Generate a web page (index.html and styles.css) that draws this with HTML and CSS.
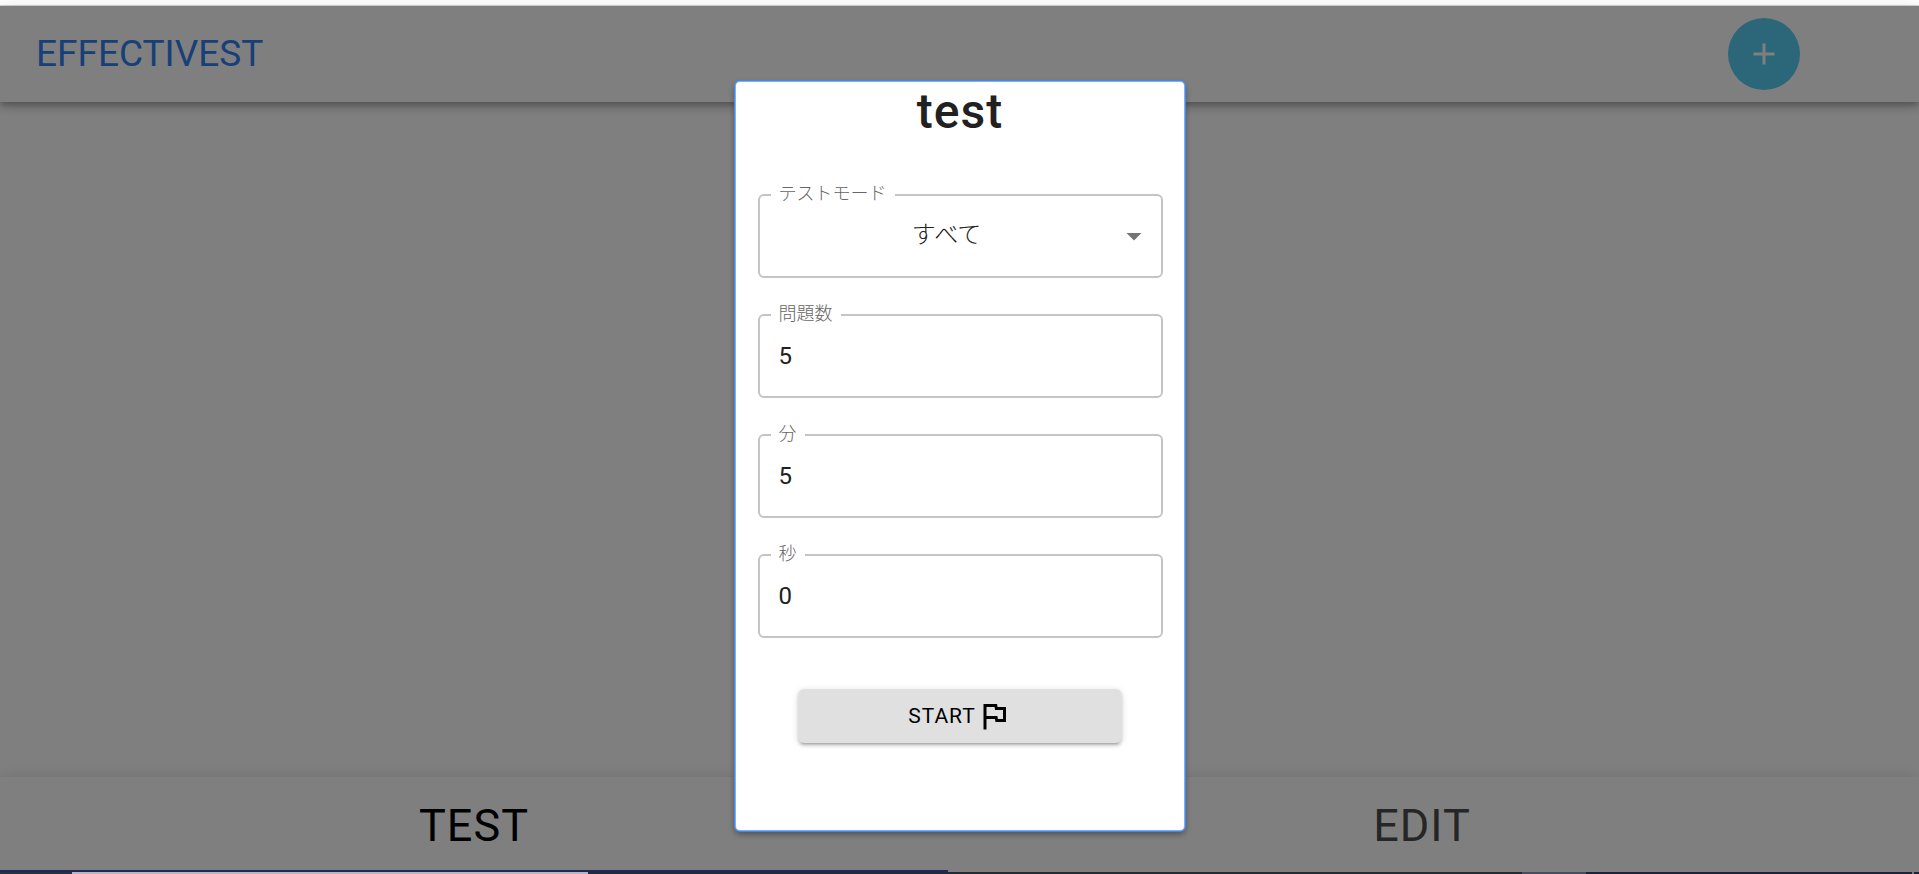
FILE: index.html
```html
<!DOCTYPE html>
<html lang="ja">
<head>
<meta charset="utf-8">
<title>Effectivest</title>
<link rel="stylesheet" href="styles.css">
</head>
<body>
<div class="top-edge"></div>
<div class="app">
  <header class="app-bar">
    <a class="brand" href="#">EFFECTIVEST</a>
    <button class="add-button" type="button" aria-label="Add">
      <svg class="icon" viewBox="0 0 24 24" aria-hidden="true"><path d="M19 13h-6v6h-2v-6H5v-2h6V5h2v6h6v2z"/></svg>
    </button>
  </header>
  <main class="content"></main>
  <nav class="tabs">
    <button class="tab tab-selected" type="button">TEST</button>
    <button class="tab" type="button">EDIT</button>
  </nav>
  <div class="backdrop">
    <form class="dialog" role="dialog" aria-labelledby="dialog-title">
      <h2 class="dialog-title" id="dialog-title">test</h2>
      <fieldset class="field">
        <legend class="field-legend"><label for="mode">テストモード</label></legend>
        <div class="select-wrap">
          <select class="control select" id="mode"><option>すべて</option></select>
          <svg class="icon select-arrow" viewBox="0 0 24 24" aria-hidden="true"><path d="M7 10l5 5 5-5z"/></svg>
        </div>
      </fieldset>
      <fieldset class="field">
        <legend class="field-legend"><label for="count">問題数</label></legend>
        <input class="control" id="count" type="text" inputmode="numeric" value="5">
      </fieldset>
      <fieldset class="field">
        <legend class="field-legend"><label for="minutes">分</label></legend>
        <input class="control" id="minutes" type="text" inputmode="numeric" value="5">
      </fieldset>
      <fieldset class="field">
        <legend class="field-legend"><label for="seconds">秒</label></legend>
        <input class="control" id="seconds" type="text" inputmode="numeric" value="0">
      </fieldset>
      <button class="start-button" type="button">START
        <svg class="icon" viewBox="0 0 24 24" aria-hidden="true"><path d="M12.36 6l.4 2H18v6h-3.36l-.4-2H7V6h5.36M14 4H5v17h2v-7h5.6l.4 2h7V6h-5.6L14 4z"/></svg>
      </button>
    </form>
  </div>
</div>
<div class="taskbar">
  <span class="task task-start"></span>
  <span class="task task-search"></span>
  <span class="task task-apps"></span>
  <span class="task task-active"></span>
  <span class="task task-tray"></span>
  <span class="task task-divider"></span>
  <span class="task task-desktop"></span>
</div>
</body>
</html>
```
FILE: styles.css
```css
* {
  box-sizing: border-box;
}

body {
  display: flex;
  flex-direction: column;
  height: 100vh;
  margin: 0;
  background: #fff;
  font-family: Roboto, "Noto Sans CJK JP", sans-serif;
  color: #212121;
}

button,
input,
select {
  font-family: inherit;
}

button {
  border: 0;
  cursor: pointer;
}

.icon {
  width: 36px;
  height: 36px;
  fill: currentColor;
}

.top-edge {
  height: 6px;
  border-bottom: 1px solid #d5d9d5;
}

.app {
  position: relative;
  display: flex;
  flex: 1;
  flex-direction: column;
  min-height: 0;
}

.app-bar {
  display: flex;
  align-items: center;
  justify-content: space-between;
  height: 96px;
  padding: 0 119px 0 36px;
  background: #fff;
  box-shadow: 0 3px 6px -1px rgba(0, 0, 0, .2), 0 6px 8px rgba(0, 0, 0, .14), 0 2px 15px rgba(0, 0, 0, .12);
}

.brand {
  padding-bottom: 2px;
  font-size: 37px;
  color: #3080f0;
  text-decoration: none;
}

.add-button {
  display: flex;
  align-items: center;
  justify-content: center;
  width: 72px;
  height: 72px;
  padding: 0;
  border-radius: 50%;
  background: #58ccf2;
  color: #fff;
}

.content {
  flex: 1;
}

.tabs {
  display: flex;
  height: 95px;
  padding-right: 23px;
  background: #fff;
  box-shadow: 0 0 15px rgba(0, 0, 0, .12);
}

.tab {
  flex: 1;
  padding: 4px 0 0;
  border-bottom: 2px solid transparent;
  background: none;
  font-size: 45px;
  letter-spacing: 1px;
  color: #4c4c4c;
}

.tab-selected {
  border-bottom-color: #3f51b5;
  color: #000;
}

.backdrop {
  position: absolute;
  inset: 0;
  display: flex;
  align-items: flex-start;
  justify-content: center;
  padding-top: 76px;
  background: rgba(0, 0, 0, .5);
}

.dialog {
  display: flex;
  flex-direction: column;
  width: 448px;
  padding: 0 21px 87px 22px;
  border-radius: 4px;
  background: #fff;
  box-shadow: 0 0 0 1px #7ab0fa, 0 0 0 2px #4a86e4, 0 3px 6px 1px rgba(0, 0, 0, .4);
}

.dialog-title {
  margin: 0 0 42px;
  font-size: 48px;
  font-weight: 500;
  line-height: 60px;
  letter-spacing: 1px;
  text-align: center;
}

.field {
  height: 94px;
  min-width: 0;
  margin: 0 0 26px;
  padding: 0;
  border: 2px solid #c4c4c4;
  border-radius: 6px;
}

.field-legend {
  margin-left: 11px;
  padding: 0 8px 2px;
  font-size: 18px;
  font-weight: 300;
  line-height: 20px;
  color: #666;
}

.control {
  display: block;
  width: 100%;
  height: 60px;
  padding: 0 19px;
  border: 0;
  outline: 0;
  background: transparent;
  font-size: 24px;
  color: #212121;
}

.select-wrap {
  position: relative;
}

.select {
  padding: 0 46px 2px 19px;
  appearance: none;
  font-weight: 300;
  text-align-last: center;
}

.select-arrow {
  position: absolute;
  top: 12px;
  right: 9px;
  color: #757575;
  pointer-events: none;
}

.start-button {
  display: flex;
  align-items: center;
  justify-content: center;
  width: 324px;
  height: 54px;
  margin: 25px auto 0;
  padding: 0;
  border-radius: 6px;
  background: #e0e0e0;
  box-shadow: 0 4px 2px -3px rgba(0, 0, 0, .2), 0 3px 3px rgba(0, 0, 0, .14), 0 1px 7px rgba(0, 0, 0, .12);
  font-size: 21px;
  letter-spacing: 1px;
  color: #000;
}

.taskbar {
  display: flex;
  height: 2px;
}

.task {
  background: #22303d;
}

.task-start {
  width: 72px;
  background: #26373f;
}

.task-search {
  width: 516px;
  background: #c2c2c2;
}

.task-apps {
  flex: 1;
}

.task-active {
  width: 64px;
  background: #4b5365;
}

.task-tray {
  width: 326px;
  background: #1d2542;
}

.task-divider {
  width: 2px;
  background: #7c8190;
}

.task-desktop {
  width: 5px;
  background: #1d2542;
}
```
